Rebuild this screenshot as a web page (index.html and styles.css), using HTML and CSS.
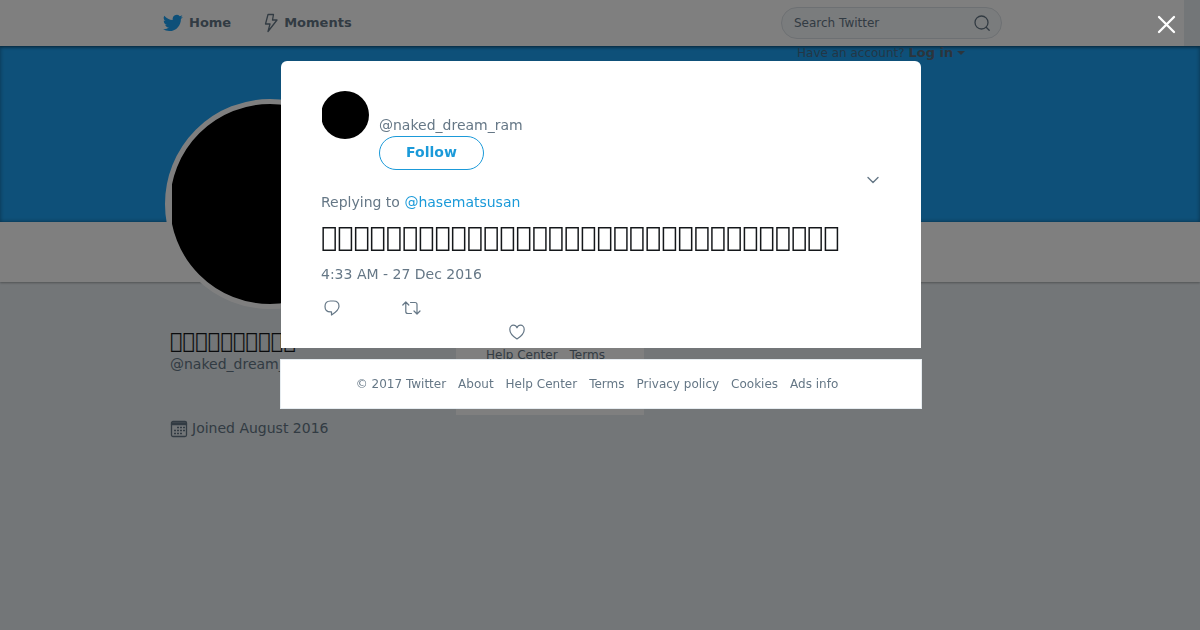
FILE: index.html
```html
<!DOCTYPE html>
<html lang="en">
  <head>
    <meta charset="utf-8">
    <title>Twitter</title>
    <link rel="stylesheet" href="styles.css">
  </head>

  <body>
    <header class="topbar">
      <div class="container topbar-inner">
        <nav class="nav">
          <a class="nav-link" href="#">
            <svg class="bird" viewBox="0 0 24 24" width="20" height="20"><path d="M23.9 4.6a10 10 0 0 1-2.8.8 4.9 4.9 0 0 0 2.1-2.7 10 10 0 0 1-3.1 1.2 4.9 4.9 0 0 0-8.4 4.5A14 14 0 0 1 1.6 3.2a4.9 4.9 0 0 0 1.5 6.5 4.9 4.9 0 0 1-2.2-.6v.1a4.9 4.9 0 0 0 3.9 4.8 5 5 0 0 1-2.2.1 4.9 4.9 0 0 0 4.6 3.4A9.9 9.9 0 0 1 0 19.5a14 14 0 0 0 7.5 2.2c9.100 0 14-7.500 14-14v-.6a10 10 0 0 0 2.400-2.500z"/></svg>
            Home
          </a>
          <a class="nav-link" href="#">
            <svg class="bolt" viewBox="0 0 14 20" width="14" height="20"><path stroke-width="1.300" d="M4 1.500H9.500L8.500 7H13L4 18.500 6 11H1.500z"/></svg>
            Moments
          </a>
        </nav>
        <div class="topbar-right">
          <form class="search">
            <input type="text" placeholder="Search Twitter" aria-label="Search Twitter">
            <button type="button" aria-label="Search">
              <svg viewBox="0 0 18 18" width="18" height="18" stroke-width="1.300"><circle cx="8.500" cy="8.500" r="6.500"/><path d="M13.200 13.200l3 3"/></svg>
            </button>
          </form>
          <a class="login" href="#">Have an account? <b>Log in</b> <i class="caret"></i></a>
        </div>
      </div>
    </header>

    <div class="banner"></div>
    <div class="profile-nav">
      <div class="container"><div class="profile-avatar"></div></div>
    </div>

    <main class="container profile">
      <section class="profile-card">
        <h1>&#xEE01;&#xEE01;&#xEE01;&#xEE01;&#xEE01;&#xEE01;&#xEE01;&#xEE01;&#xEE01;&#xEE01;</h1>
        <p class="handle">@naked_dream_ram</p>
        <p class="joined">
          <svg viewBox="0 0 18 20" width="18" height="20" stroke-width="1.300"><rect x="1.500" y="3.500" width="15" height="15" rx="1.500"/><path d="M1.500 5h15M1.500 6.500h15"/><path class="dots" d="M7 9.500h8M4 12.500h11M4 15.500h8"/></svg>
          Joined August 2016
        </p>
      </section>
      <section class="page-links">
        <a href="#">Help Center</a>
        <a href="#">Terms</a>
      </section>
    </main>

    <div class="overlay">
      <button class="close" type="button" aria-label="Close">
        <svg viewBox="0 0 20 20" width="20" height="20" stroke-width="2.300"><path d="M3 3l15 15M18 3L3 18"/></svg>
      </button>

      <article class="tweet">
        <div class="tweet-head">
          <div class="avatar"></div>
          <div>
            <a class="handle" href="#">@naked_dream_ram</a>
            <button class="follow" type="button">Follow</button>
          </div>
        </div>
        <button class="more" type="button" aria-label="More">
          <svg viewBox="0 0 14 10" width="14" height="10" stroke-width="1.400"><path d="M2 2.500l5 5 5-5"/></svg>
        </button>
        <p class="replying">Replying to <a href="#">@hasematsusan</a></p>
        <p class="tweet-text">&#xEE01;&#xEE01;&#xEE01;&#xEE01;&#xEE01;&#xEE01;&#xEE01;&#xEE01;&#xEE01;&#xEE01;&#xEE01;&#xEE01;&#xEE01;&#xEE01;&#xEE01;&#xEE01;&#xEE01;&#xEE01;&#xEE01;&#xEE01;&#xEE01;&#xEE01;&#xEE01;&#xEE01;&#xEE01;&#xEE01;&#xEE01;&#xEE01;&#xEE01;&#xEE01;&#xEE01;&#xEE01;</p>
        <p class="time">4:33 AM - 27 Dec 2016</p>
        <div class="actions">
          <button type="button" aria-label="Reply">
            <svg viewBox="0 0 18 18" width="18" height="18" stroke-width="1.200"><path d="M7.500 2h3c3.500 0 5.500 2.200 5.500 5.200 0 3.300-2.300 5.500-7.500 8.800v-3.200h-1C4 12.800 2 10.500 2 7.400 2 4.300 4 2 7.500 2z"/></svg>
          </button>
          <button type="button" aria-label="Retweet">
            <svg viewBox="0 0 20 18" width="20" height="18" stroke-width="1.200"><path d="M1.800 6l3-3 3 3M4.800 3v9.500c0 1.500.5 2 2 2h3.700M9.500 3.500H14c1.500 0 2 .5 2 2V15M13 12l3 3 3-3"/></svg>
          </button>
          <button class="like" type="button" aria-label="Like">
            <svg viewBox="0 0 18 18" width="18" height="18" stroke-width="1.200"><path d="M9 16C5 13.500 1.800 10.200 1.800 6.500c0-2.500 1.700-4.300 3.600-4.300C7 2.200 8.400 3.200 9 4.800c.6-1.600 2-2.600 3.600-2.600 1.900 0 3.600 1.800 3.600 4.300C16.200 10.200 13 13.500 9 16z"/></svg>
          </button>
        </div>
      </article>

      <footer class="footer">
        <span>© 2017 Twitter</span>
        <a href="#">About</a>
        <a href="#">Help Center</a>
        <a href="#">Terms</a>
        <a href="#">Privacy policy</a>
        <a href="#">Cookies</a>
        <a href="#">Ads info</a>
      </footer>
    </div>
  </body>
</html>
```
FILE: styles.css
```css
* {
  box-sizing: border-box;
}
body {
  margin: 0;
  background-color: #e6ecf0;
  color: #657786;
  font-family: "DejaVu Sans", sans-serif;
  font-size: 14px;
  line-height: 20px;
}
h1, p {
  margin: 0;
}
a {
  color: inherit;
  text-decoration: none;
}
button {
  border: 0;
  padding: 0;
  background: none;
  font: inherit;
  color: inherit;
}
svg {
  display: block;
  flex: none;
  fill: none;
  stroke: currentColor;
  stroke-linecap: round;
  stroke-linejoin: round;
}
.container {
  max-width: 876px;
  margin: 0 auto;
}

/* top bar */
.topbar {
  position: relative;
  height: 46px;
  background-color: #fff;
  border-right: 16px solid #e6ecf0;
  box-shadow: 0 1px 3px rgba(0,0,0,0.4);
}
.topbar-inner {
  display: flex;
  justify-content: space-between;
  padding: 0 28px 0 9px;
}
.nav {
  display: flex;
  gap: 33px;
}
.nav-link {
  display: flex;
  align-items: center;
  gap: 6px;
  height: 46px;
  font-size: 13px;
  font-weight: bold;
}
.bird {
  fill: #1da1f2;
  stroke: none;
}
.topbar-right {
  width: 221px;
  padding-top: 7px;
}
.search {
  display: flex;
  align-items: center;
  height: 32px;
  padding: 0 10px 0 12px;
  border: 1px solid #dbe1e6;
  border-radius: 16px;
  background-color: #f5f8fa;
}
.search input {
  flex: 1;
  min-width: 0;
  padding: 0;
  border: 0;
  background: none;
  font: inherit;
  font-size: 12px;
}
.search input::placeholder {
  color: #657786;
  opacity: 1;
}
.login {
  display: block;
  padding: 4px 0 0 16px;
  font-size: 12px;
  white-space: nowrap;
  color: #456d8c;
}
.login b {
  font-size: 13px;
  color: #576a7a;
}
.caret {
  display: inline-block;
  border: 4px solid transparent;
  border-top-color: #576a7a;
  border-bottom: 0;
  vertical-align: 2px;
}

/* profile page */
.banner {
  height: 176px;
  background-color: #1da1f2;
  box-shadow: inset 0 0 4px rgba(0,0,0,0.4);
}
.profile-nav {
  height: 60px;
  background-color: #fff;
  box-shadow: 0 1px 2px rgba(0,0,0,0.3);
}
.profile-nav .container {
  position: relative;
}
.profile-avatar {
  position: absolute;
  left: 3px;
  top: -123px;
  width: 210px;
  height: 210px;
  border: 5px solid #fff;
  border-radius: 50%;
  background: linear-gradient(to right, #fff 2px, #000 2px);
}
.profile {
  display: flex;
  gap: 21px;
}
.profile-card {
  width: 273px;
  padding: 48px 0 0 8px;
}
.profile-card h1 {
  font-size: 21px;
  font-weight: normal;
  line-height: 22px;
  color: #14171a;
}
.profile-card .handle {
  padding-top: 2px;
}
.joined {
  display: flex;
  align-items: center;
  gap: 4px;
  margin-top: 44px;
}
.joined .dots {
  stroke-linecap: butt;
  stroke-dasharray: 2 1;
}
.page-links {
  display: flex;
  align-items: center;
  gap: 12px;
  width: 188px;
  height: 133px;
  padding: 12px 30px 0;
  background-color: #fff;
  font-size: 12px;
  white-space: nowrap;
}

/* permalink overlay */
.overlay {
  position: fixed;
  inset: 0;
  padding: 61px 0 0 2px;
  background-color: rgba(0,0,0,0.5);
}
.close {
  position: absolute;
  top: 14px;
  right: 24px;
  color: #fff;
}
.tweet {
  display: flow-root;
  width: 640px;
  margin: 0 auto;
  padding: 30px 40px 7px;
  border-radius: 6px 6px 0 0;
  background-color: #fff;
}
.tweet-head {
  display: flex;
  gap: 10px;
}
.avatar {
  width: 48px;
  height: 48px;
  border-radius: 50%;
  background: linear-gradient(to right, #fff 1px, #000 1px);
}
.tweet-head .handle {
  display: block;
  padding-top: 24px;
}
.follow {
  width: 105px;
  height: 34px;
  margin-top: 1px;
  padding-bottom: 2px;
  border: 1px solid #1b9ad9;
  border-radius: 17px;
  font-weight: bold;
  color: #1b9ad9;
}
.more {
  display: block;
  margin: 5px 1px 0 auto;
}
.replying {
  margin-top: 7px;
}
.replying a {
  color: #1b9ad9;
}
.tweet-text {
  margin-top: 9px;
  font-size: 27px;
  line-height: 32px;
  white-space: nowrap;
  color: #14171a;
}
.time {
  margin-top: 11px;
}
.actions {
  display: flex;
  align-items: flex-start;
  gap: 60px;
  margin-top: 15px;
  padding-left: 2px;
}
.like {
  margin: 24px 0 0 27px;
}
.footer {
  display: flex;
  justify-content: center;
  gap: 12px;
  width: 642px;
  margin: 11px auto 0;
  padding: 14px 8px 14px 0;
  border: 1px solid #e6ecf0;
  background-color: #fff;
  font-size: 12px;
}
```
